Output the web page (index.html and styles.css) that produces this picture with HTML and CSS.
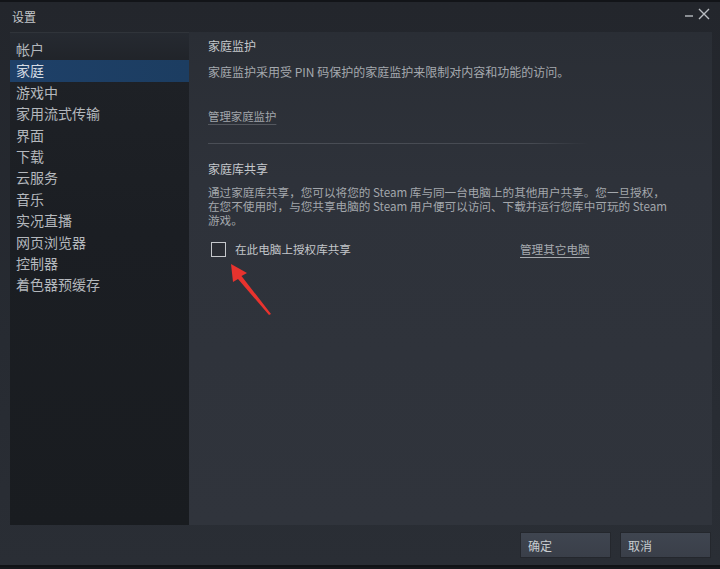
FILE: index.html
```html
<!DOCTYPE html>
<html lang="zh-CN">
<head>
<meta charset="utf-8">
<title>设置</title>
<link rel="stylesheet" href="styles.css">
</head>
<body>
<div class="window">
  <div class="titlebar">
    <span class="title">设置</span>
    <div class="winctl">
      <svg class="min" width="10" height="10" viewBox="0 0 10 10"><path d="M1 7h8" stroke="#b9bdc2" stroke-width="1.4"/></svg>
      <svg class="close" width="12" height="12" viewBox="0 0 12 12"><path d="M1 1L11 11M11 1L1 11" stroke="#b9bdc2" stroke-width="1.4"/></svg>
    </div>
  </div>
  <div class="main">
    <ul class="sidebar">
      <li>帐户</li>
      <li class="active">家庭</li>
      <li>游戏中</li>
      <li>家用流式传输</li>
      <li>界面</li>
      <li>下载</li>
      <li>云服务</li>
      <li>音乐</li>
      <li>实况直播</li>
      <li>网页浏览器</li>
      <li>控制器</li>
      <li>着色器预缓存</li>
    </ul>
    <div class="content">
      <section class="sec">
        <h2 class="head">家庭监护</h2>
        <p class="desc">家庭监护采用受 PIN 码保护的家庭监护来限制对内容和功能的访问。</p>
        <a class="manage">管理家庭监护</a>
      </section>
      <div class="sep"></div>
      <section class="sec">
        <h2 class="head">家庭库共享</h2>
        <p class="para">通过家庭库共享，您可以将您的 Steam 库与同一台电脑上的其他用户共享。您一旦授权，<br>在您不使用时，与您共享电脑的 Steam 用户便可以访问、下载并运行您库中可玩的 Steam<br>游戏。</p>
        <div class="checkrow">
          <label class="check"><span class="box"></span><span>在此电脑上授权库共享</span></label>
          <a class="link">管理其它电脑</a>
        </div>
      </section>
      <svg class="arrow" width="60" height="70" viewBox="0 0 60 70"><path d="M2 2 L18 11 L12.5 14 L42 52 L40 53 L9 17 L4 20 Z" fill="#e8332e"/></svg>
    </div>
  </div>
  <div class="footer">
    <button class="btn">确定</button>
    <button class="btn">取消</button>
  </div>
</div>
</body>
</html>
```
FILE: styles.css
```css
* { box-sizing: border-box; }
html, body { margin: 0; padding: 0; }
body {
  width: 720px;
  height: 569px;
  background: #16181c;
  font-family: "Noto Sans CJK SC", "Noto Sans", "Liberation Sans", sans-serif;
  overflow: hidden;
}
.window {
  width: 720px;
  height: 567px;
  border-top: 2px solid #121418;
  background: linear-gradient(180deg, #23262c 0%, #272b32 60%, #2a2e35 100%);
  display: flex;
  flex-direction: column;
}
.titlebar {
  height: 30px;
  display: flex;
  align-items: center;
  justify-content: space-between;
  padding: 0 10px 2px 12px;
}
.title {
  font-size: 12px;
  color: #c3c6ca;
}
.winctl {
  display: flex;
  align-items: center;
  gap: 4px;
  margin-top: -4px;
}
.main {
  height: 493px;
  display: flex;
  margin: 0 8px 0 10px;
  background: #2e323a;
}
.sidebar {
  list-style: none;
  margin: 0;
  padding: 6px 0 0 0;
  width: 179px;
  background: linear-gradient(180deg, #262a31 0px, #1e2126 40px, #1b1e23 200px, #191c20 100%);
  border-top: 1px solid #30343a;
}
.sidebar li {
  height: 21.4px;
  line-height: 21.4px;
  padding-left: 6px;
  font-size: 14px;
  color: #b4b8bd;
  white-space: nowrap;
}
.sidebar li.active {
  background: linear-gradient(90deg, #1e4068 0%, #1c3d61 100%);
  color: #d4dbe3;
}
.content {
  flex: 1;
  position: relative;
  padding: 4px 0 0 19px;
  background: linear-gradient(180deg, #2a2e35 0%, #2e323a 30%, #30343c 100%);
}
.sec { display: flex; flex-direction: column; }
.head {
  margin: 0;
  font-size: 12px;
  font-weight: normal;
  line-height: 20px;
  color: #c5c8cc;
}
.desc {
  margin: 6px 0 0 0;
  font-size: 12px;
  line-height: 20px;
  color: #a5a9ae;
  white-space: nowrap;
}
.manage {
  margin-top: 24px;
  align-self: flex-start;
  font-size: 11.4px;
  line-height: 20px;
  color: #a2a6ab;
  text-decoration: underline;
  text-decoration-color: rgba(160, 164, 170, 0.35);
  text-underline-offset: 3px;
}
.sep {
  height: 1px;
  margin: 17px 0 15px 0;
  width: 380px;
  background: linear-gradient(90deg, #4a4e56 0%, #464a52 85%, rgba(70, 74, 82, 0) 100%);
}
.para {
  margin: 6px 0 0 0;
  font-size: 11.6px;
  line-height: 14px;
  color: #a3a7ac;
  white-space: nowrap;
}
.checkrow {
  display: flex;
  align-items: center;
  margin-top: 12px;
  height: 20px;
}
.check {
  display: flex;
  align-items: center;
  gap: 9px;
  font-size: 11.6px;
  color: #c2c5c9;
  padding-left: 3px;
  width: 312px;
}
.box {
  width: 15px;
  height: 15px;
  border: 1.5px solid #c5c8cc;
  background: #2a2d34;
}
.link {
  font-size: 11.6px;
  color: #a6aaaf;
  text-decoration: underline;
  text-underline-offset: 3px;
}
.arrow {
  position: absolute;
  left: 40px;
  top: 230px;
}
.footer {
  flex: 1;
  display: flex;
  justify-content: flex-end;
  align-items: flex-start;
  gap: 11px;
  padding: 8px 10px 0 0;
  border-bottom: 2px solid #111316;
}
.btn {
  width: 89px;
  height: 24px;
  border: none;
  background: linear-gradient(180deg, #3f4550 0%, #3a3f49 100%);
  color: #c8ccd0;
  font-family: inherit;
  font-size: 12px;
  text-align: left;
  padding: 0 0 0 7px;
  box-shadow: 0 0 0 1px #24272d;
}
```
